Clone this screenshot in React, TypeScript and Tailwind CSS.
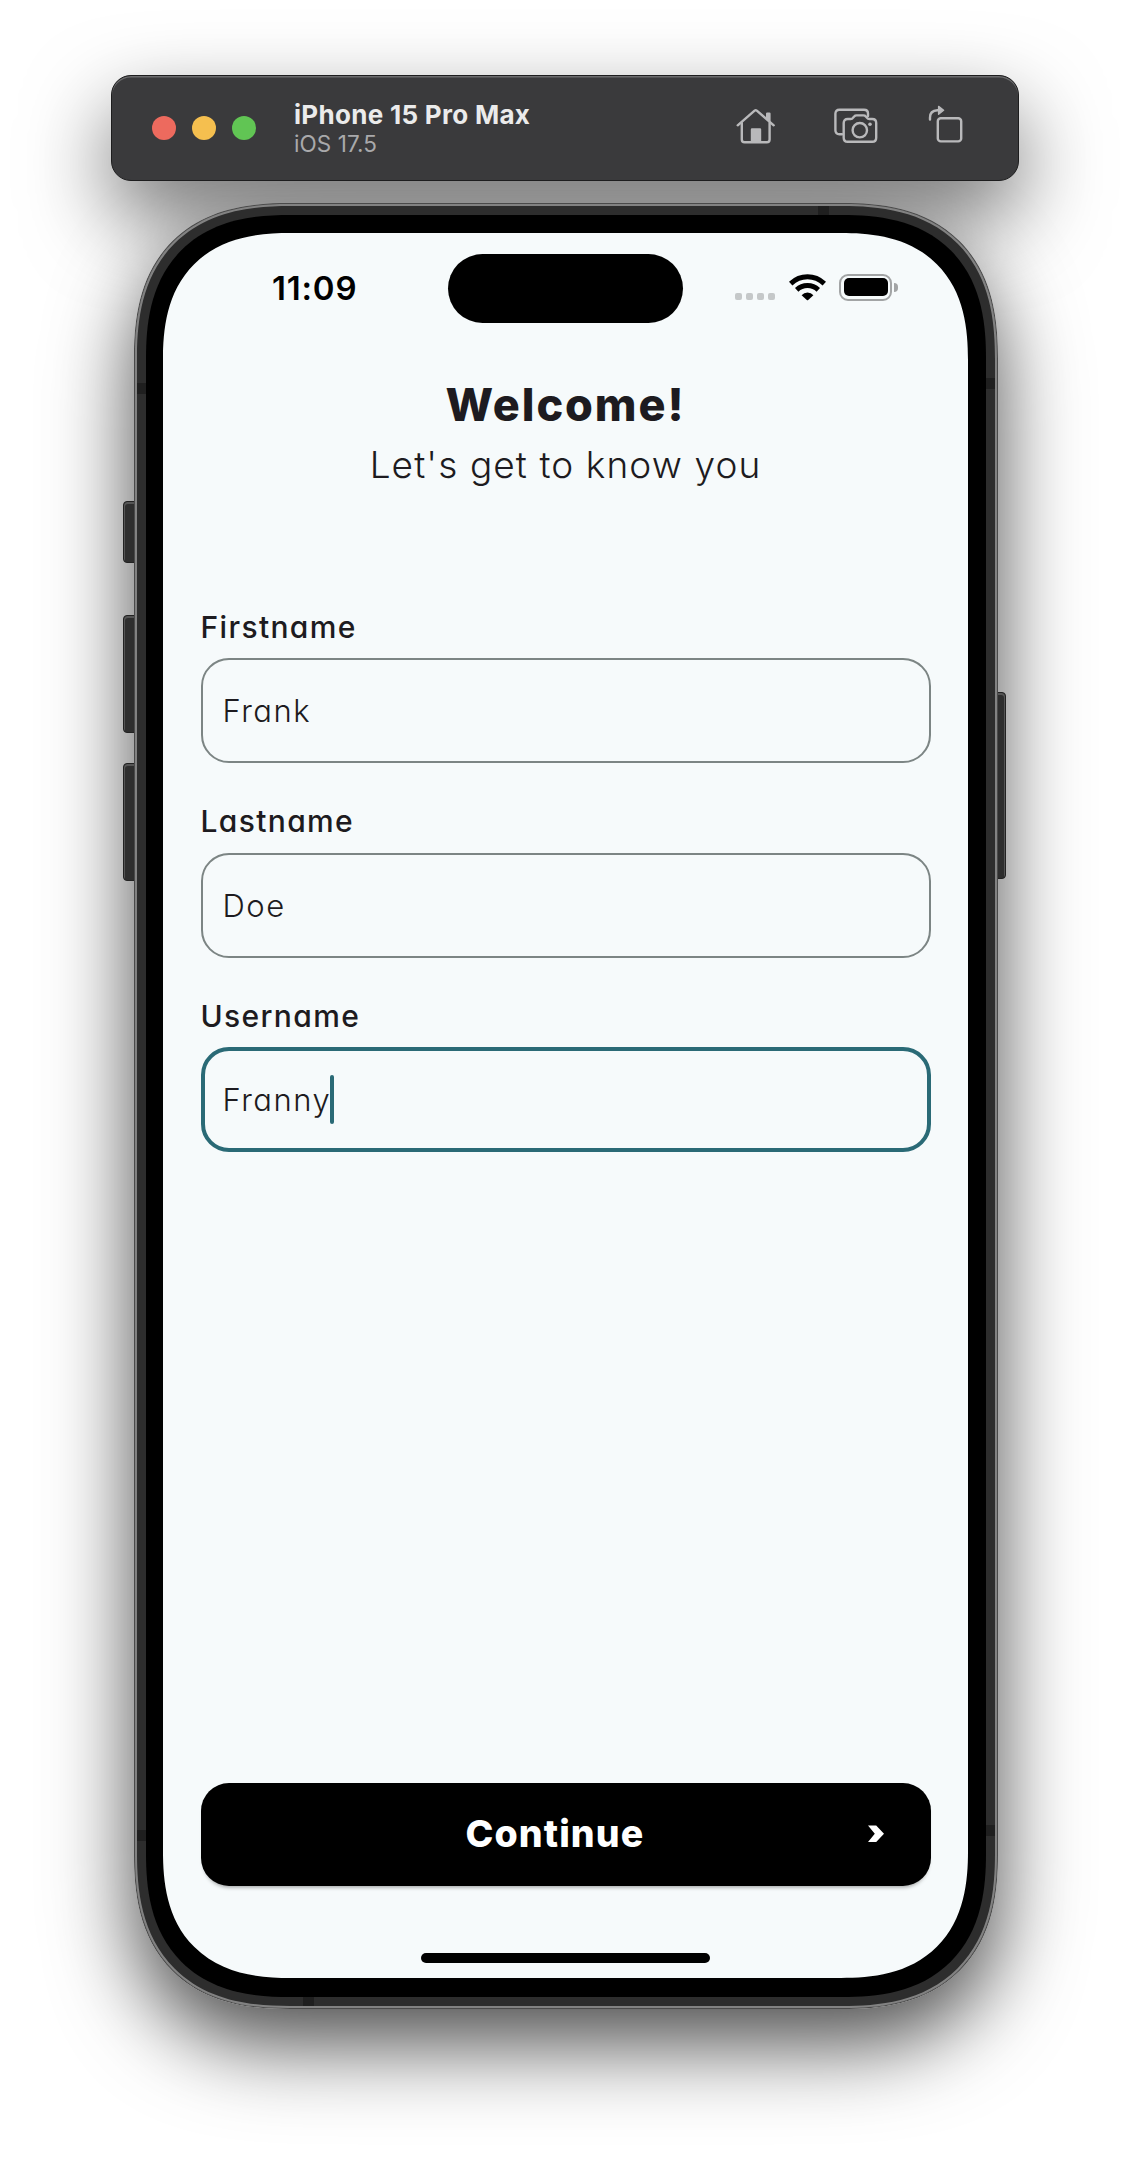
import type { ReactNode } from "react";

const screenFont = "font-[Inter,'Liberation_Sans',sans-serif] [font-feature-settings:'cv11']";

function HomeIcon() {
  return (
    <svg width="40" height="36" viewBox="0 0 40 36" fill="none" stroke="#b9b9bb" strokeWidth="2.4" strokeLinecap="round" strokeLinejoin="round">
      <path d="M1.7 17.3 18.6 2.6Q19.7 1.8 20.8 2.6L37.7 17.3" />
      <path d="M5.8 15V31.4Q5.8 34.2 8.6 34.2H30.8Q33.6 34.2 33.6 31.4V15" />
      <path d="M31.2 11V5.6H33.4V12.8" />
      <path d="M16 21.5H24V33H16Z" fill="#b9b9bb" />
    </svg>
  );
}

function ScreenshotIcon() {
  return (
    <svg width="44" height="36" viewBox="0 0 44 36" fill="none" stroke="#b9b9bb" strokeWidth="2.4" strokeLinejoin="round" strokeLinecap="round">
      <path d="M8 26.2H5.4Q1.4 26.2 1.4 22.2V5.8Q1.4 1.8 5.4 1.8H30Q34 1.8 34 5.6V8" />
      <path d="M9.7 15Q9.7 11 13.7 11H16.6Q18.2 11 19.2 9.6L20.2 8.4Q21 7.4 22.6 7.4H29.4Q31 7.4 31.8 8.4L32.8 9.6Q33.8 11 35.4 11H38.2Q42.2 11 42.2 15V29.8Q42.2 33.8 38.2 33.8H13.7Q9.7 33.8 9.7 29.8Z" />
      <circle cx="25.8" cy="22.2" r="7.2" />
      <circle cx="36" cy="16.2" r="1.8" fill="#b9b9bb" stroke="none" />
    </svg>
  );
}

function RotateIcon() {
  return (
    <svg width="36" height="38" viewBox="0 0 36 38" fill="none" stroke="#b9b9bb" strokeWidth="2.4" strokeLinecap="round" strokeLinejoin="round">
      <path d="M2 14.6V12.4Q2 5.6 9.4 5.2H11.5" />
      <path d="M10.6 1.4 15.6 5.3 10.6 9.2Z" fill="#b9b9bb" strokeWidth="1.4" />
      <rect x="9.8" y="13.2" width="23.4" height="23.2" rx="3" />
    </svg>
  );
}

function WifiIcon() {
  return (
    <svg width="37" height="27" viewBox="0 0 37 27" fill="none" stroke="#000" strokeWidth="5">
      <path d="M1.7 9.6Q9 2.8 18.5 2.8T35.3 9.6" />
      <path d="M7.7 15.8Q12.2 11.6 18.5 11.6T29.3 15.8" />
      <path d="M12.6 21.2Q15 18.4 18.5 18.4T24.4 21.2L19.2 25.9Q18.5 26.5 17.8 25.9Z" fill="#000" stroke="none" />
    </svg>
  );
}

function Toolbar() {
  return (
    <header className="relative flex h-[106px] w-[908px] items-center rounded-[20px] border border-[#1d1d1e] bg-[#3a3a3c] pr-[54px] pl-[40px] font-[Inter,sans-serif] shadow-[0_35px_84px_rgba(0,0,0,0.55),inset_0_1.5px_0_rgba(255,255,255,0.25)]">
      <div className="flex gap-4">
        <span className="size-6 rounded-full bg-[#ed6a5e]" />
        <span className="size-6 rounded-full bg-[#f5bf4f]" />
        <span className="size-6 rounded-full bg-[#61c554]" />
      </div>
      <div className="mt-[2px] ml-[38px] flex flex-col">
        <span className="text-[26px] leading-[30px] font-bold tracking-[0.3px] text-[#ebebeb]">iPhone 15 Pro Max</span>
        <span className="text-[22.5px] leading-[28px] tracking-[0.1px] text-[#a9a9ab]">iOS 17.5</span>
      </div>
      <div className="-mt-[5px] ml-auto flex items-center">
        <HomeIcon />
        <div className="mt-[1px] ml-[58px]">
          <ScreenshotIcon />
        </div>
        <div className="-mt-[4px] ml-[50px]">
          <RotateIcon />
        </div>
      </div>
    </header>
  );
}

function StatusBar() {
  return (
    <div className="mt-[21px] flex h-[69px] items-center font-[Inter,sans-serif]">
      <span className="w-[285px] pl-[109px] text-[33px] leading-none font-semibold tracking-[0.8px] text-black">11:09</span>
      <div className="h-[69px] w-[235px] rounded-full bg-black" />
      <div className="mt-[16px] ml-[52px] flex gap-1">
        {[0, 1, 2, 3].map((i) => (
          <span key={i} className="size-[7px] rounded-[2px] bg-[#c5c8c9]" />
        ))}
      </div>
      <div className="-mt-[3px] ml-[14px]">
        <WifiIcon />
      </div>
      <div className="-mt-[3px] ml-[13px] flex items-center">
        <div className="h-[27px] w-[53px] rounded-[9px] border-2 border-[#a2a4a5] p-[2.5px]">
          <div className="h-full w-full rounded-[5px] bg-black" />
        </div>
        <span className="ml-[2px] h-[9px] w-[4px] rounded-r-full bg-[#a2a4a5]" />
      </div>
    </div>
  );
}

function Field({ label, value, focused = false }: { label: string; value: string; focused?: boolean }) {
  return (
    <div>
      <label className="mb-[9.5px] block text-[30px] leading-[44px] font-medium tracking-[1.35px] text-[#1d1b20]">{label}</label>
      <div
        className={
          focused
            ? "flex h-[105px] items-center rounded-[28px] border-4 border-[#2a6a76] pl-[18px]"
            : "flex h-[105px] items-center rounded-[28px] border-2 border-[#7c8584] pl-5"
        }
      >
        <span className="text-[31px] leading-none font-light tracking-[1.5px] text-[#1d1b20]">{value}</span>
        {focused && <span className="-ml-[1.5px] h-[49px] w-1 rounded-full bg-[#2a6a76]" />}
      </div>
    </div>
  );
}

function Frame({ children }: { children: ReactNode }) {
  return (
    <div className="relative mt-[22px] ml-[2px] h-[1806px] w-[864px]">
      <div className="absolute inset-0 -z-10 rounded-[156px] shadow-[0_35px_84px_rgba(0,0,0,0.7)] [corner-shape:superellipse(1.3)]" />
      <span className="absolute top-[298px] -left-[11px] h-[62px] w-[14px] rounded-l-[4px] border border-[#222] bg-[#2e2e2e] shadow-[inset_1px_2px_0_#555]" />
      <span className="absolute top-[412px] -left-[11px] h-[118px] w-[14px] rounded-l-[4px] border border-[#222] bg-[#2e2e2e] shadow-[inset_1px_2px_0_#555]" />
      <span className="absolute top-[560px] -left-[11px] h-[118px] w-[14px] rounded-l-[4px] border border-[#222] bg-[#2e2e2e] shadow-[inset_1px_2px_0_#555]" />
      <span className="absolute top-[489px] -right-[8px] h-[187px] w-[12px] rounded-r-[4px] border border-[#222] bg-[#2e2e2e] shadow-[inset_-1px_2px_0_#555]" />
      <div className="relative h-full w-full rounded-[156px] border border-[#4a4a4a] bg-[#828282] p-[2px] [corner-shape:superellipse(1.3)]">
        <div className="h-full w-full rounded-[153px] bg-[#2d2d2d] p-[9px] [corner-shape:superellipse(1.3)]">
          <div className="h-full w-full rounded-[144px] bg-black pt-[18px] pr-[18px] pb-[19px] pl-[17px] [corner-shape:superellipse(1.3)]">
            {children}
          </div>
        </div>
        <span className="absolute top-[179px] left-[2px] h-[11px] w-[9px] bg-[#1f1f1f]" />
        <span className="absolute top-[1626px] left-[2px] h-[11px] w-[9px] bg-[#1f1f1f]" />
        <span className="absolute top-[174px] right-[2px] h-[11px] w-[9px] bg-[#1f1f1f]" />
        <span className="absolute top-[1621px] right-[2px] h-[11px] w-[9px] bg-[#1f1f1f]" />
        <span className="absolute top-[2px] left-[683px] h-[9px] w-[11px] bg-[#1f1f1f]" />
        <span className="absolute bottom-[2px] left-[168px] h-[9px] w-[11px] bg-[#1f1f1f]" />
      </div>
    </div>
  );
}

export default function App() {
  return (
    <div className="isolate flex h-[2160px] w-[1130px] flex-col items-center overflow-hidden bg-white pt-[75px]">
      <Toolbar />
      <Frame>
        <div className={`flex h-full w-full flex-col rounded-[127px] bg-[#f6fafb] [corner-shape:superellipse(1.3)] ${screenFont}`}>
          <StatusBar />
          <div className="mt-[52px] text-center text-[#1d1b20]">
            <h1 className="text-[45px] leading-[60px] font-extrabold tracking-[1.9px]">Welcome!</h1>
            <p className="text-[37px] leading-[60px] font-light tracking-[1.1px]">Let's get to know you</p>
          </div>
          <div className="mt-[109.5px] flex flex-col gap-9 px-[37.5px]">
            <Field label="Firstname" value="Frank" />
            <Field label="Lastname" value="Doe" />
            <Field label="Username" value="Franny" focused />
          </div>
          <div className="mt-auto px-[37.5px]">
            <button className="flex h-[103px] w-full items-center justify-between rounded-[28px] bg-black pr-[47px] pl-[265px] text-white shadow-[0_4px_4px_-3px_rgba(0,0,0,0.4)]">
              <span className="-mt-[1px] text-[37.5px] leading-none font-extrabold tracking-[1.1px]">Continue</span>
              <svg className="-mt-[2px]" width="16" height="18" viewBox="0 0 16 18" fill="#fff">
                <path d="M0 0.5H8.2L16 8.7 8.2 17H0L6.8 8.7Z" />
              </svg>
            </button>
          </div>
          <div className="mx-auto mt-[67px] mb-[15px] h-[10px] w-[289px] rounded-full bg-black" />
        </div>
      </Frame>
    </div>
  );
}
